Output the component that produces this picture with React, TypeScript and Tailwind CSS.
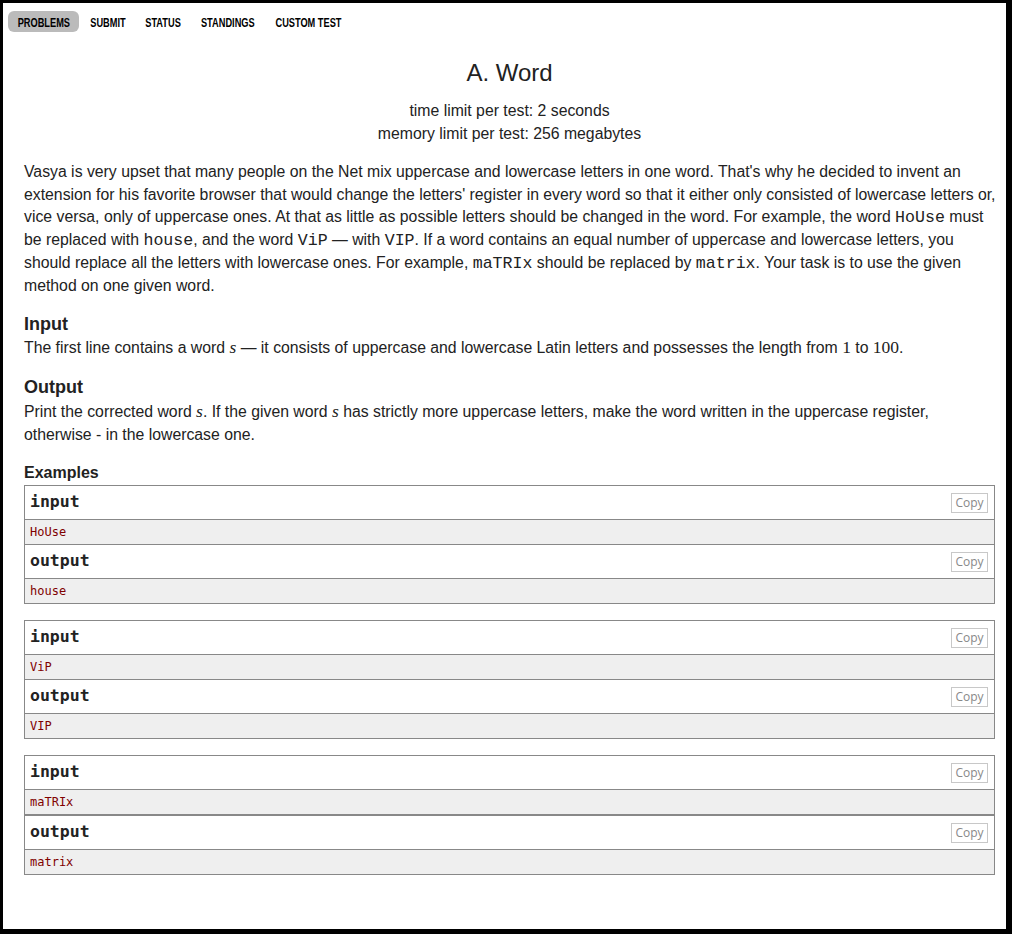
import React from 'react';

const tabs = [
  { label: 'PROBLEMS', w: 'w-[71px]' },
  { label: 'SUBMIT', w: 'w-[58px]' },
  { label: 'STATUS', w: 'w-[53px]' },
  { label: 'STANDINGS', w: 'w-[75px]' },
  { label: 'CUSTOM TEST', w: 'w-[86px]' },
];

const tests = [
  { input: 'HoUse', output: 'house' },
  { input: 'ViP', output: 'VIP' },
  { input: 'maTRIx', output: 'matrix', thick: true },
];

function Tt({ children }: { children: React.ReactNode }) {
  return <span className="font-['Liberation_Mono',monospace] text-[16.6px] leading-none">{children}</span>;
}

function M({ children, italic }: { children: React.ReactNode; italic?: boolean }) {
  return (
    <span className={`font-['Liberation_Serif',serif] text-[17.5px] leading-none ${italic ? 'italic' : ''}`}>
      {children}
    </span>
  );
}

function CopyBtn() {
  return (
    <span className="h-[20px] w-[37px] border border-[#c8c8c8] text-[12px] leading-[18px] text-center text-[#888] font-['Open_Sans',sans-serif]">
      Copy
    </span>
  );
}

function Section({ title, data }: { title: string; data: string }) {
  return (
    <>
      <div className="h-[33px] flex items-center justify-between pl-[5px] pr-[6px] bg-white">
        <span className="font-['DejaVu_Sans_Mono',monospace] font-bold text-[16.5px] text-[#222]">{title}</span>
        <CopyBtn />
      </div>
      <div className="h-[25px] border-t border-[#888] bg-[#efefef] flex items-center pl-[5px] font-['DejaVu_Sans_Mono',monospace] text-[12px] text-[#800000]">
        {data}
      </div>
    </>
  );
}

export default function App() {
  return (
    <div className="h-[934px] bg-black pt-[3px] pl-[3px] pr-[6px] pb-[5px] font-['Liberation_Sans',Arial,sans-serif] text-[#222]">
      <div className="h-full bg-white">
        {/* Top nav */}
        <nav className="flex pt-[8px] pl-[5px]">
          {tabs.map((t, i) => (
            <span
              key={t.label}
              className={`${t.w} h-[21px] flex items-center justify-center pt-[2px] rounded-[6px] ${i === 0 ? 'bg-[#bbbbbb]' : ''}`}
            >
              <span className="inline-block whitespace-nowrap scale-x-[0.71] text-[13px] leading-none font-bold text-black">
                {t.label}
              </span>
            </span>
          ))}
        </nav>

        <div className="pl-[21px] pr-[7px]">
          {/* Header */}
          <div className="text-center mr-[4px]">
            <div className="mt-[26px] text-[24px] leading-[30px]">A. Word</div>
            <div className="mt-[11px] text-[15.8px] leading-[23px]">time limit per test: 2 seconds</div>
            <div className="text-[15.8px] leading-[23px]">memory limit per test: 256 megabytes</div>
          </div>

          {/* Legend */}
          <p className="mt-[16px] text-[15.8px] leading-[22.7px]">
            Vasya is very upset that many people on the Net mix uppercase and lowercase letters in one word. That's why he
            decided to invent an extension for his favorite browser that would change the letters' register in every word so
            that it either only consisted of lowercase letters or, vice versa, only of uppercase ones. At that as little as
            possible letters should be changed in the word. For example, the word <Tt>HoUse</Tt> must be replaced with{' '}
            <Tt>house</Tt>, and the word <Tt>ViP</Tt> — with <Tt>VIP</Tt>. If a word contains an equal number of uppercase and
            lowercase letters, you should replace all the letters with lowercase ones. For example, <Tt>maTRIx</Tt> should be
            replaced by <Tt>matrix</Tt>. Your task is to use the given method on one given word.
          </p>

          {/* Input */}
          <div className="mt-[16px] text-[18px] leading-[22px] font-bold">Input</div>
          <p className="mt-[2px] text-[15.8px] leading-[22px]">
            The first line contains a word <M italic>s</M> — it consists of uppercase and lowercase Latin letters and possesses
            the length from <M>1</M> to <M>100</M>.
          </p>

          {/* Output */}
          <div className="mt-[17px] text-[18px] leading-[22px] font-bold">Output</div>
          <p className="mt-[2px] text-[15.8px] leading-[23px]">
            Print the corrected word <M italic>s</M>. If the given word <M italic>s</M> has strictly more uppercase letters,
            make the word written in the uppercase register, otherwise - in the lowercase one.
          </p>

          {/* Examples */}
          <div className="mt-[17px] text-[16px] leading-[20px] font-bold">Examples</div>
          <div className="mt-[2px] mr-[4px] flex flex-col gap-4">
            {tests.map((t) => (
              <div key={t.input} className="border border-[#888]">
                <Section title="input" data={t.input} />
                <div className={t.thick ? 'border-t-2 border-[#888]' : 'border-t border-[#888]'}>
                  <Section title="output" data={t.output} />
                </div>
              </div>
            ))}
          </div>
        </div>
      </div>
    </div>
  );
}
